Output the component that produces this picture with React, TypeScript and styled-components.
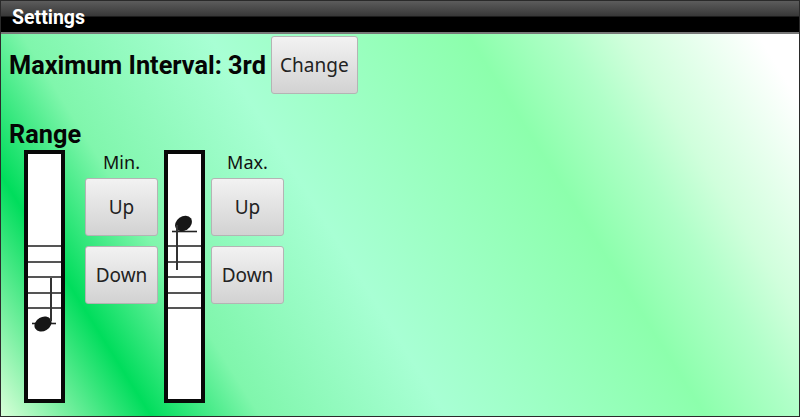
import styled, { createGlobalStyle } from "styled-components";

const GlobalStyle = createGlobalStyle`
  html, body {
    margin: 0;
    padding: 0;
    background: #222;
  }
  body {
    font-family: Roboto, "Liberation Sans", sans-serif;
  }
`;

const STAFF_LINES = [0, 1, 2, 3, 4];

function Note({ stemDown }: { stemDown?: boolean }) {
  if (stemDown) {
    return (
      <svg width="33" height="60" viewBox="0 0 33 60">
        <line x1="0" y1="16.5" x2="25" y2="16.5" stroke="#222" strokeWidth="1.6" />
        <ellipse cx="11.5" cy="8.5" rx="9" ry="7" fill="#161616" transform="rotate(-35 11.5 8.5)" />
        <line x1="5" y1="10" x2="5" y2="55" stroke="#333" strokeWidth="2" />
      </svg>
    );
  }
  return (
    <svg width="33" height="60" viewBox="0 0 33 60">
      <line x1="0" y1="46.5" x2="24" y2="46.5" stroke="#222" strokeWidth="1.6" />
      <ellipse cx="11" cy="47" rx="9" ry="7" fill="#161616" transform="rotate(-30 11 47)" />
      <line x1="19" y1="1" x2="19" y2="44" stroke="#333" strokeWidth="2" />
    </svg>
  );
}

function Staff({ stemDown }: { stemDown?: boolean }) {
  return (
    <StaffBox>
      <Lines>
        {STAFF_LINES.map((l) => (
          <StaffLine key={l} />
        ))}
      </Lines>
      <NoteSlot $stemDown={stemDown}>
        <Note stemDown={stemDown} />
      </NoteSlot>
    </StaffBox>
  );
}

function Controls({ label, offset }: { label: string; offset: number }) {
  return (
    <ControlColumn $offset={offset}>
      <ControlLabel>{label}</ControlLabel>
      <TallButton>Up</TallButton>
      <TallButton>Down</TallButton>
    </ControlColumn>
  );
}

export default function App() {
  return (
    <Screen>
      <GlobalStyle />
      <TitleBar>Settings</TitleBar>
      <Content>
        <IntervalRow>
          <Heading>Maximum Interval: 3rd</Heading>
          <ChangeButton>Change</ChangeButton>
        </IntervalRow>
        <RangeHeading>Range</RangeHeading>
        <RangeRow>
          <Staff />
          <Controls label="Min." offset={20} />
          <Staff stemDown />
          <Controls label="Max." offset={6} />
        </RangeRow>
      </Content>
    </Screen>
  );
}

const Screen = styled.div`
  width: 798px;
  height: 415px;
  border: 1px solid #2a2a2a;
  display: flex;
  flex-direction: column;
  overflow: hidden;
`;

const TitleBar = styled.div`
  height: 33px;
  flex: none;
  padding-left: 11px;
  box-sizing: border-box;
  background: linear-gradient(to bottom, #5c5c5c 0, #383838 15px, #000 16px, #000 31px, #777 31px);
  color: #fff;
  font-size: 19.5px;
  font-weight: 700;
  line-height: 34px;
`;

const Content = styled.div`
  flex: 1;
  padding: 2px 0 0 8px;
  background: linear-gradient(
    58deg,
    #d8ffd8 0,
    #00dd5c 14.5%,
    #80f6ac 25%,
    #a8ffd4 43%,
    #8cffac 68%,
    #b0ffc8 77%,
    #d0ffdc 83%,
    #ffffff 96%
  );
`;

const IntervalRow = styled.div`
  display: flex;
  align-items: center;
  gap: 5px;
`;

const Heading = styled.div`
  font-size: 25.3px;
  font-weight: 700;
  color: #050505;
`;

const RangeHeading = styled(Heading)`
  margin-top: 28px;
  line-height: 25px;
`;

const ButtonBase = styled.button`
  box-sizing: border-box;
  border: 1px solid #b4b4b4;
  border-radius: 3px;
  background: linear-gradient(to bottom, #f2f2f2, #d2d2d2);
  color: #222;
  font-family: "Noto Sans", "Liberation Sans", sans-serif;
  font-size: 19px;
  padding: 0;
`;

const ChangeButton = styled(ButtonBase)`
  width: 87px;
  height: 58px;
`;

const TallButton = styled(ButtonBase)`
  width: 73px;
  height: 58px;
`;

const RangeRow = styled.div`
  display: flex;
  align-items: flex-start;
  padding-left: 15px;
  margin-top: 3px;
`;

const StaffBox = styled.div`
  position: relative;
  box-sizing: border-box;
  width: 41px;
  height: 253px;
  border: 4px solid #080808;
  background: #fff;
`;

const Lines = styled.div`
  display: flex;
  flex-direction: column;
  gap: 13.5px;
  margin-top: 91px;
`;

const StaffLine = styled.div`
  height: 2px;
  background: #555;
`;

const NoteSlot = styled.div<{ $stemDown?: boolean }>`
  position: absolute;
  left: 4px;
  top: ${(p) => (p.$stemDown ? "61px" : "123px")};
  line-height: 0;
`;

const ControlColumn = styled.div<{ $offset: number }>`
  display: flex;
  flex-direction: column;
  align-items: center;
  gap: 10px;
  margin-left: ${(p) => p.$offset}px;
  margin-right: ${(p) => (p.$offset > 10 ? 6 : 0)}px;
`;

const ControlLabel = styled.div`
  font-family: "Noto Sans", "Liberation Sans", sans-serif;
  font-size: 18px;
  line-height: 18px;
  margin: 3px 0 -3px;
  color: #111;
`;
